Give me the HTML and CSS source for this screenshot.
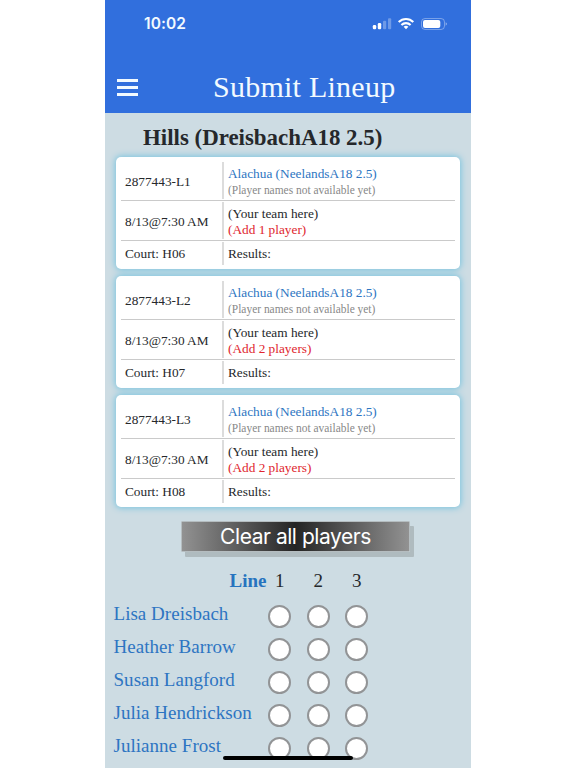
FILE: index.html
```html
<!DOCTYPE html>
<html lang="en">
<head>
    <meta charset="UTF-8">
    <title>Submit Lineup</title>
    <link rel="stylesheet" href="styles.css">
</head>
<body>
    <div class="phone">
        <header>
            <div class="status">
                <span class="time">10:02</span>
                <svg class="status-icons" width="76" height="14" viewBox="0 0 76 14">
                    <g fill="#fff">
                        <rect x="0.8" y="8" width="3.4" height="4.2" rx="1.2"/>
                        <rect x="5.8" y="6" width="3.4" height="6.2" rx="1.2"/>
                        <rect x="11" y="3.7" width="3.2" height="8.5" rx="1" opacity=".3"/>
                        <rect x="16" y="1.2" width="3.2" height="11" rx="1" opacity=".3"/>
                    </g>
                    <g fill="none" stroke="#fff" stroke-width="2.1">
                        <path d="M26.7 5a10.3 10.3 0 0 1 14.6 0"/>
                        <path d="M29.4 8a6.6 6.6 0 0 1 9.2 0"/>
                    </g>
                    <path d="M31.6 9.8a3.5 3.5 0 0 1 4.8 0L34 12.3z" fill="#fff"/>
                    <rect x="49.5" y="1.5" width="23" height="11" rx="3.5" fill="none" stroke="#fff" opacity=".35"/>
                    <rect x="51" y="3" width="17.3" height="8" rx="2" fill="#fff"/>
                    <path d="M73.7 5.3q2.4 1.7 0 3.4z" fill="#fff" opacity=".5"/>
                </svg>
            </div>
            <div class="navbar">
                <div class="menu"><span></span><span></span><span></span></div>
                <h1>Submit Lineup</h1>
            </div>
        </header>

        <h2>Hills (DreisbachA18 2.5)</h2>

        <div class="matches">
            <div class="match">
                <div class="row">
                    <div class="left">2877443-L1</div>
                    <div class="right"><a>Alachua (NeelandsA18 2.5)</a><small>(Player names not available yet)</small></div>
                </div>
                <div class="row">
                    <div class="left">8/13@7:30 AM</div>
                    <div class="right"><span>(Your team here)</span><span class="add">(Add 1 player)</span></div>
                </div>
                <div class="row last">
                    <div class="left">Court: H06</div>
                    <div class="right">Results:</div>
                </div>
            </div>
            <div class="match">
                <div class="row">
                    <div class="left">2877443-L2</div>
                    <div class="right"><a>Alachua (NeelandsA18 2.5)</a><small>(Player names not available yet)</small></div>
                </div>
                <div class="row">
                    <div class="left">8/13@7:30 AM</div>
                    <div class="right"><span>(Your team here)</span><span class="add">(Add 2 players)</span></div>
                </div>
                <div class="row last">
                    <div class="left">Court: H07</div>
                    <div class="right">Results:</div>
                </div>
            </div>
            <div class="match">
                <div class="row">
                    <div class="left">2877443-L3</div>
                    <div class="right"><a>Alachua (NeelandsA18 2.5)</a><small>(Player names not available yet)</small></div>
                </div>
                <div class="row">
                    <div class="left">8/13@7:30 AM</div>
                    <div class="right"><span>(Your team here)</span><span class="add">(Add 2 players)</span></div>
                </div>
                <div class="row last">
                    <div class="left">Court: H08</div>
                    <div class="right">Results:</div>
                </div>
            </div>
        </div>

        <button class="clear">Clear all players</button>

        <div class="lineup">
            <div class="line-head"><b>Line</b><span>1</span><span>2</span><span>3</span></div>
            <div class="player"><a>Lisa Dreisbach</a><input type="radio" name="p1"><input type="radio" name="p1"><input type="radio" name="p1"></div>
            <div class="player"><a>Heather Barrow</a><input type="radio" name="p2"><input type="radio" name="p2"><input type="radio" name="p2"></div>
            <div class="player"><a>Susan Langford</a><input type="radio" name="p3"><input type="radio" name="p3"><input type="radio" name="p3"></div>
            <div class="player"><a>Julia Hendrickson</a><input type="radio" name="p4"><input type="radio" name="p4"><input type="radio" name="p4"></div>
            <div class="player"><a>Julianne Frost</a><input type="radio" name="p5"><input type="radio" name="p5"><input type="radio" name="p5"></div>
        </div>
        <div class="home-bar"></div>
    </div>
</body>
</html>
```
FILE: styles.css
```css
* {
    box-sizing: border-box;
}
body {
    margin: 0;
    height: 768px;
    overflow: hidden;
    background: #fff;
    font-family: "Liberation Serif", "Times New Roman", serif;
    color: #25282b;
}
.phone {
    position: relative;
    width: 366px;
    height: 768px;
    margin-left: 105px;
    overflow: hidden;
    background: #cddce3;
}
header {
    height: 113px;
    background: #316fdd;
    color: #f2faff;
}
.status {
    display: flex;
    justify-content: space-between;
    height: 48px;
    padding: 15px 23px 0 39px;
}
.time {
    font: 600 15.5px/18px Inter, sans-serif;
    letter-spacing: 0.1px;
}
.status-icons {
    margin-top: 2px;
}
.navbar {
    display: flex;
    align-items: center;
    height: 65px;
    padding: 15px 0 0 12px;
}
.menu {
    display: flex;
    flex-direction: column;
    gap: 4px;
    width: 21px;
    margin-top: -1px;
}
.menu span {
    height: 3px;
    background: #f2faff;
}
h1 {
    margin: 0 0 0 75px;
    padding-bottom: 3px;
    font-size: 30px;
    font-weight: normal;
    line-height: 34px;
    letter-spacing: 0.25px;
}
h2 {
    margin: 0;
    padding: 12px 0 0 38px;
    height: 44px;
    font-size: 22.9px;
    line-height: 26px;
}
a {
    color: #2d75c2;
}
.matches {
    display: flex;
    flex-direction: column;
    gap: 7px;
    padding: 0 11px;
}
.match {
    height: 112px;
    padding: 5px 5px 4px;
    background: #fff;
    border-radius: 5px;
    box-shadow: 0 0 6px 1px #79c4df;
    font-size: 13.3px;
    line-height: 16px;
}
.row {
    display: flex;
    height: 40px;
    padding: 1px 0;
    border-bottom: 1px solid #cacaca;
}
.row:first-child {
    height: 39px;
    padding-top: 0;
}
.row.last {
    height: 24px;
    padding: 1px 0 0;
    border: 0;
}
.left {
    display: flex;
    align-items: center;
    width: 103px;
    padding: 3px 0 0 4px;
    border-right: 2px solid #dcdcdc;
}
.right {
    display: flex;
    flex-direction: column;
    justify-content: center;
    padding: 3px 0 0 4px;
}
.last .left,
.last .right {
    padding-top: 0;
}
.right small {
    font-size: 11.45px;
    color: #888;
}
.add {
    color: #e0262e;
}
.clear {
    display: block;
    width: 229px;
    height: 31px;
    margin: 14px 0 0 76px;
    padding: 1px 0 0;
    border: 1px solid #b5bdc0;
    border-radius: 1px;
    background: linear-gradient(to right, #929292, #242424 50%, #929292);
    box-shadow: 4px 5px 0 #afbbbf;
    color: #fff;
    font: 21px/28px Inter, sans-serif;
    letter-spacing: -0.45px;
}
.lineup {
    margin: 18px 0 0 8.5px;
    font-size: 19px;
}
.line-head,
.player {
    display: grid;
    grid-template-columns: 147px 38.5px 38.5px 38.5px;
    height: 32.9px;
    justify-items: center;
}
.line-head {
    line-height: 22px;
    height: 30px;
}
.line-head b {
    justify-self: end;
    margin-right: -6px;
    color: #2673bf;
}
.player a {
    justify-self: start;
    white-space: nowrap;
    line-height: 28px;
    letter-spacing: 0.03px;
}
input {
    appearance: none;
    width: 23px;
    height: 23px;
    margin: 5px 0 0;
    border: 2px solid #929496;
    border-radius: 50%;
    background: #fff;
}
.home-bar {
    position: absolute;
    left: 118px;
    bottom: 8px;
    width: 130px;
    height: 4px;
    border-radius: 2px;
    background: #000;
}
```
